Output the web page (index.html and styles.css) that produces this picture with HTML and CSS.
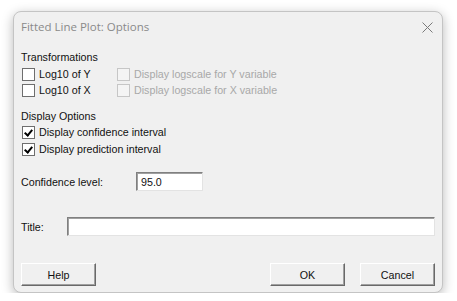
FILE: index.html
```html
<!DOCTYPE html>
<html lang="en">
<head>
    <meta charset="UTF-8">
    <title>Fitted Line Plot: Options</title>
    <link rel="stylesheet" href="styles.css">
</head>
<body>
    <div class="dialog">
        <div class="titlebar">
            <span class="title">Fitted Line Plot: Options</span>
            <span class="close">
                <svg width="11" height="11" viewBox="0 0 11 11">
                    <path d="M0.5 0.5 L10.5 10.5 M10.5 0.5 L0.5 10.5" stroke="#7a7a7a" stroke-width="1" fill="none"/>
                </svg>
            </span>
        </div>
        <div class="content">
            <div class="group-label">Transformations</div>
            <div class="check-grid">
                <label class="check"><span class="box"></span>Log10 of Y</label>
                <label class="check disabled"><span class="box"></span>Display logscale for Y variable</label>
                <label class="check"><span class="box"></span>Log10 of X</label>
                <label class="check disabled"><span class="box"></span>Display logscale for X variable</label>
            </div>

            <div class="group-label second">Display Options</div>
            <label class="check"><span class="box checked"></span>Display confidence interval</label>
            <label class="check"><span class="box checked"></span>Display prediction interval</label>

            <div class="field conf">
                <span class="field-label">Confidence level:</span>
                <div class="textbox small">95.0</div>
            </div>

            <div class="field title-field">
                <span class="field-label short">Title:</span>
                <div class="textbox wide"></div>
            </div>

            <div class="buttons">
                <button class="btn">Help</button>
                <span class="spacer"></span>
                <button class="btn">OK</button>
                <button class="btn">Cancel</button>
            </div>
        </div>
    </div>
</body>
</html>
```

FILE: styles.css
```css
* {
    margin: 0;
    padding: 0;
    box-sizing: border-box;
}

body {
    background: #ffffff;
    font-family: "Liberation Sans", Arial, sans-serif;
    font-size: 10.7px;
    color: #111;
    padding: 11px 14px 0 13px;
}

.dialog {
    width: 430px;
    height: 282px;
    background: #f0f0f0;
    border: 1px solid #c4c4c4;
    border-radius: 8px;
    box-shadow: 0 3px 12px rgba(0, 0, 0, 0.28);
}

.titlebar {
    height: 29px;
    display: flex;
    align-items: center;
    justify-content: space-between;
    padding: 0 9px 0 7px;
}

.title {
    font-family: "Open Sans", "Noto Sans", sans-serif;
    font-size: 11.5px;
    color: #8a8a8a;
}

.close {
    display: flex;
    margin-top: 2px;
}

.content {
    padding: 0 7px;
}

.group-label {
    height: 16px;
    line-height: 16px;
    margin-top: 8px;
}

.group-label.second {
    margin-top: 10px;
}

.check-grid {
    display: grid;
    grid-template-columns: 95px auto;
    margin-top: 1px;
}

.check {
    display: flex;
    align-items: center;
    height: 16px;
    padding-left: 1px;
}

.check + .check {
    margin-top: 1px;
}

.check-grid .check {
    margin-top: 0;
}

.box {
    width: 13px;
    height: 13px;
    border: 1px solid #6e6e6e;
    background: #fff;
    margin-right: 4px;
    position: relative;
}

.disabled {
    color: #a8a8a8;
}

.disabled .box {
    border-color: #c6c6c6;
    background: #f4f4f4;
}

.box.checked::after {
    content: "";
    position: absolute;
    left: 3px;
    top: 1px;
    width: 3px;
    height: 6px;
    border: solid #000;
    border-width: 0 2px 2px 0;
    transform: rotate(40deg);
}

.field {
    display: flex;
    align-items: center;
}

.conf {
    margin-top: 15px;
}

.title-field {
    margin-top: 26px;
}

.field-label {
    width: 115px;
}

.field-label.short {
    width: 46px;
}

.textbox {
    height: 19px;
    background: #fff;
    border: 1px solid;
    border-color: #808080 #e3e3e3 #e3e3e3 #808080;
    box-shadow: inset 1px 1px 0 #a0a0a0;
    padding: 2px 4px;
    line-height: 14px;
}

.textbox.small {
    width: 67px;
}

.textbox.wide {
    width: 368px;
}

.buttons {
    display: flex;
    margin-top: 27px;
}

.spacer {
    flex: 1;
}

.btn {
    width: 75px;
    height: 23px;
    font-family: inherit;
    font-size: 10.7px;
    color: #111;
    background: #f0f0f0;
    border: 1px solid;
    border-color: #ffffff #696969 #696969 #ffffff;
    box-shadow: inset -1px -1px 0 #a0a0a0;
}

.btn + .btn {
    margin-left: 15px;
}
```
